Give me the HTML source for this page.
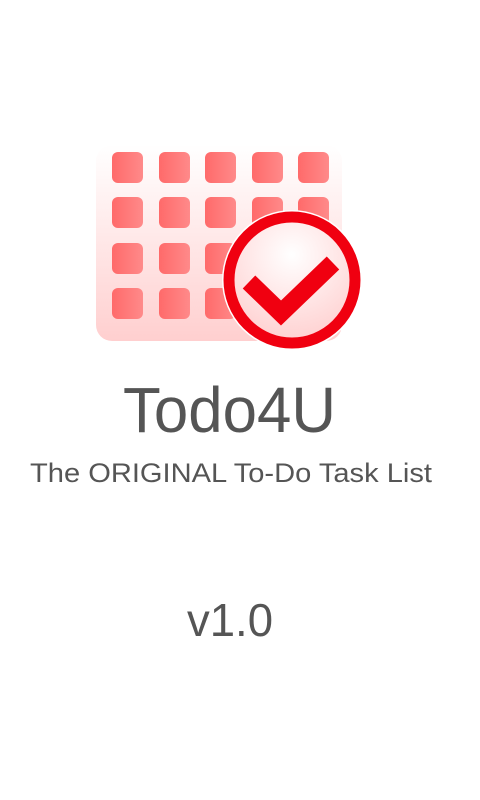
<!DOCTYPE html>
<html><head><style>
html,body{margin:0;padding:0;background:#fff;width:480px;height:800px;overflow:hidden}
</style></head><body>
<svg width="480" height="800" viewBox="0 0 480 800" xmlns="http://www.w3.org/2000/svg">
<defs>
<linearGradient id="bg" x1="0" y1="0" x2="0" y2="1">
<stop offset="0" stop-color="#fff"/><stop offset="1" stop-color="#ffcfcf"/>
</linearGradient>
<linearGradient id="sq" x1="0" y1="0" x2="1" y2="0">
<stop offset="0" stop-color="#ff6a6a"/><stop offset="1" stop-color="#ff8a8a"/>
</linearGradient>
<radialGradient id="cin" cx="0.5" cy="0.3" r="0.7">
<stop offset="0" stop-color="#fff"/><stop offset="1" stop-color="#ffd0d0"/>
</radialGradient>
</defs>
<rect x="96" y="145" width="246" height="196" rx="16" fill="url(#bg)"/>
<g fill="url(#sq)">
<rect x="112" y="152" width="31" height="31" rx="6"/><rect x="159" y="152" width="31" height="31" rx="6"/><rect x="205" y="152" width="31" height="31" rx="6"/><rect x="252" y="152" width="31" height="31" rx="6"/><rect x="298" y="152" width="31" height="31" rx="6"/>
<rect x="112" y="197" width="31" height="31" rx="6"/><rect x="159" y="197" width="31" height="31" rx="6"/><rect x="205" y="197" width="31" height="31" rx="6"/><rect x="252" y="197" width="31" height="31" rx="6"/><rect x="298" y="197" width="31" height="31" rx="6"/>
<rect x="112" y="243" width="31" height="31" rx="6"/><rect x="159" y="243" width="31" height="31" rx="6"/><rect x="205" y="243" width="31" height="31" rx="6"/>
<rect x="112" y="288" width="31" height="31" rx="6"/><rect x="159" y="288" width="31" height="31" rx="6"/><rect x="205" y="288" width="31" height="31" rx="6"/>
</g>
<circle cx="292" cy="280" r="70" fill="#fff"/>
<circle cx="292" cy="280" r="63" fill="url(#cin)" stroke="#f00010" stroke-width="11"/>
<path d="M249 282 L281 313 L333 263" fill="none" stroke="#f00010" stroke-width="18" stroke-linejoin="miter"/>
<g fill="#555" font-family="Liberation Sans, sans-serif">
<text x="123" y="432" font-size="64" textLength="213" lengthAdjust="spacingAndGlyphs">Todo4U</text>
<text x="30" y="482" font-size="27" textLength="402" lengthAdjust="spacingAndGlyphs">The ORIGINAL To-Do Task List</text>
<text x="187" y="636" font-size="46" textLength="86" lengthAdjust="spacingAndGlyphs">v1.0</text>
</g>
</svg>
</body></html>
